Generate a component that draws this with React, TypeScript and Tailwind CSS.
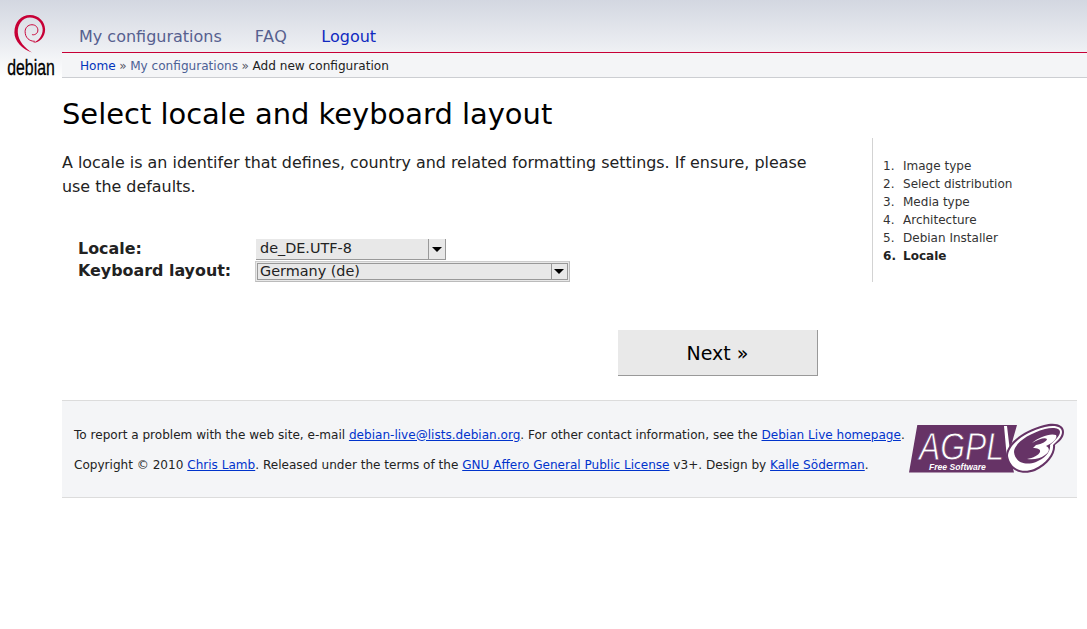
const linkBlue = 'text-[#0033cc] underline';

function DebianLogo() {
  return (
    <div className="flex w-[62px] shrink-0 flex-col items-center pt-[14px]">
      <svg width="34" height="41" viewBox="0 0 34 41" className="ml-[-3px]">
        <path
          d="M19 39.500 C9 36 1 28 1 19 C1 8 8 1 17 1 C26 1 32.500 8 32.500 16 C32.500 24 26 30 20 29.500 C26 28 30 22 30 16 C30 9 24 3.500 17 3.500 C9 3.500 4 11 4.500 19 C5 28 12 35 19 39.500 Z"
          fill="#c70036"
        />
        <path
          d="M22 28 C16 28 12 24 12 18 C12 14 15 11 19 11 C23 11 25.500 14 25 17.500 C24.500 20.500 21 22 19 21"
          fill="none"
          stroke="#c70036"
          strokeWidth="1"
        />
      </svg>
      <div className="mt-[4px] origin-center scale-x-[0.72] font-['Liberation_Sans',sans-serif] text-[22px] leading-[20px] text-black [-webkit-text-stroke:0.3px_black]">
        debian
      </div>
    </div>
  );
}

function Select({ value, wide }: { value: string; wide?: boolean }) {
  if (wide) {
    return (
      <div className="flex h-[21px] w-[315px] border border-t-[#ccc] border-l-[#ccc] border-r-[#bbb] border-b-[#bbb] bg-[#e8e8e8] p-px">
        <div className="flex flex-1 items-center justify-between border border-[#999] pl-[2px] pr-px">
          <span className="text-[14.400px] text-[#222]">{value}</span>
          <span className="flex h-[15px] w-[15px] items-center justify-center border-l border-[#999]">
            <span className="h-0 w-0 border-x-[5px] border-t-[5px] border-x-transparent border-t-black" />
          </span>
        </div>
      </div>
    );
  }
  return (
    <div className="ml-px flex h-[21px] w-[190px] items-center justify-between self-end border-r border-b border-[#999] bg-[#e8e8e8] pl-[4px]">
      <span className="text-[14.400px] text-[#222]">{value}</span>
      <span className="flex h-[20px] w-[17px] items-center justify-center border-l border-[#999]">
        <span className="h-0 w-0 border-x-[5px] border-t-[5px] border-x-transparent border-t-black" />
      </span>
    </div>
  );
}

function AgplLogo() {
  return (
    <svg width="156" height="52" viewBox="0 0 156 52" className="shrink-0">
      <path d="M8.300 2 L108 2 L100 30 L105 49.500 L0 49.500 Z" fill="#663366" />
      <path d="M95 3 L98 3 L100 20 L102 36 L98 36 Z" fill="#fff" />
      <path
        d="M97 33 C97 22 112 8 135 2 C147 -1 155 2 155 9 C155 15 150 19 146 22 C147 30 140 42 126 48 C112 53 99 47 97 33 Z"
        fill="#663366"
      />
      <path
        d="M99 33 C99 23 113 10 136 4 C146 1.500 153 3.500 153 9 C153 14 148 18 144 22 C145 30 138 40 125 46 C112 51 101 45 99 33 Z"
        fill="#fff"
      />
      <path
        d="M105 29 C105 21 118 11 136 6 C144 4 151 5 151 9 C151 13 146 17 141 22 C142 29 136 35 127 39 C116 43 106 39 105 29 Z"
        fill="#663366"
      />
      <path
        d="M123 20 C130 14 141 10 147 12 C149 15 144 20 137 23 C141 25 141 29 136 32 C131 36 124 37 118 36 C124 35 130 32 131 29 C132 26 128 25 124 25 L127 22 C133 21 138 18 138 16 C136 14 130 16 123 20 Z"
        fill="#fff"
      />
      <text
        x="10"
        y="37"
        fontFamily="Liberation Sans"
        fontStyle="italic"
        fontSize="39"
        fill="#fff"
        stroke="#663366"
        strokeWidth="0.800"
        textLength="85"
        lengthAdjust="spacingAndGlyphs"
      >
        AGPL
      </text>
      <text x="20" y="46.500" fontFamily="Liberation Sans" fontStyle="italic" fontWeight="bold" fontSize="8.600" fill="#fff">
        Free Software
      </text>
    </svg>
  );
}

export default function App() {
  return (
    <div className="min-h-[629px] bg-white font-['DejaVu_Sans',sans-serif] text-[#111]">
      <div className="flex h-[78px] bg-gradient-to-b from-[#d3d7e1] via-[#eceef2] via-[60%] to-white">
        <DebianLogo />
        <div className="flex flex-1 flex-col pr-0">
          <nav className="flex h-[53px] items-end border-b border-[#c70036] pb-[3px] pl-[17px] text-[16px] leading-[24px]">
            <a className="text-[#56608f]">My configurations</a>
            <a className="ml-[33px] tracking-[0.5px] text-[#56608f]">FAQ</a>
            <a className="ml-[34px] text-[#1029c0]">Logout</a>
          </nav>
          <div className="flex h-[25px] items-center border-b border-[#ccced2] bg-[#f4f5f7] pl-[18px] pt-[2px] text-[12.100px] text-[#222]">
            <a className="text-[#0033bb]">Home</a>
            <span className="mx-[3.500px] text-[#556]">»</span>
            <a className="text-[#4d6195]">My configurations</a>
            <span className="mx-[3.500px] text-[#556]">»</span>
            <span>Add new configuration</span>
          </div>
        </div>
      </div>

      <div className="pl-[62px] pr-[10px]">
        <h1 className="mt-[18px] text-[28.950px] leading-[36px] text-black">Select locale and keyboard layout</h1>

        <div className="flex">
          <div className="w-[810px] shrink-0">
            <p className="mt-[19px] w-[770px] text-[15.920px] leading-[24px] text-[#222]">
              A locale is an identifer that defines, country and related formatting settings. If ensure, please use the defaults.
            </p>
            <div className="mt-[39px] flex flex-col pl-[16px]">
              <div className="flex items-center">
                <label className="w-[177px] text-[15.900px] font-bold leading-[22px] text-[#222]">Locale:</label>
                <Select value="de_DE.UTF-8" />
              </div>
              <div className="mt-px flex items-center">
                <label className="w-[177px] pb-[2px] text-[15.900px] font-bold leading-[19px] text-[#222]">Keyboard layout:</label>
                <Select value="Germany (de)" wide />
              </div>
            </div>
          </div>
          <ol className="mt-[6px] h-[144px] w-[205px] border-l border-[#d3d3d3] pl-[10px] pt-[19px] text-[12.020px] leading-[18px] text-[#333]">
            {['Image type', 'Select distribution', 'Media type', 'Architecture', 'Debian Installer', 'Locale'].map((step, i) => (
              <li key={step} className={i === 5 ? 'flex font-bold text-[#222]' : 'flex'}>
                <span className="w-[20px]">{i + 1}.</span>
                <span>{step}</span>
              </li>
            ))}
          </ol>
        </div>

        <div className="mt-[48px] flex w-[756px] justify-end">
          <button className="h-[46px] w-[200px] border-r border-b border-[#999] bg-[#e9e9e9] pt-[2px] text-[19px] text-black">
            Next »
          </button>
        </div>

        <footer className="mt-[24px] flex h-[98px] items-center justify-between border-y border-[#dcdcdc] bg-[#f4f5f7] pl-[12px] pr-[12px] text-[12.070px] text-[#222]">
          <div className="flex flex-col gap-[15px] whitespace-nowrap pt-[2px] leading-[15px]">
            <p>
              To report a problem with the web site, e-mail <a className={linkBlue}>debian-live@lists.debian.org</a>. For other contact information, see the{' '}
              <a className={linkBlue}>Debian Live homepage</a>.
            </p>
            <p>
              Copyright © 2010 <a className={linkBlue}>Chris Lamb</a>. Released under the terms of the{' '}
              <a className={linkBlue}>GNU Affero General Public License</a> v3+. Design by <a className={linkBlue}>Kalle Söderman</a>.
            </p>
          </div>
          <AgplLogo />
        </footer>
      </div>
    </div>
  );
}
